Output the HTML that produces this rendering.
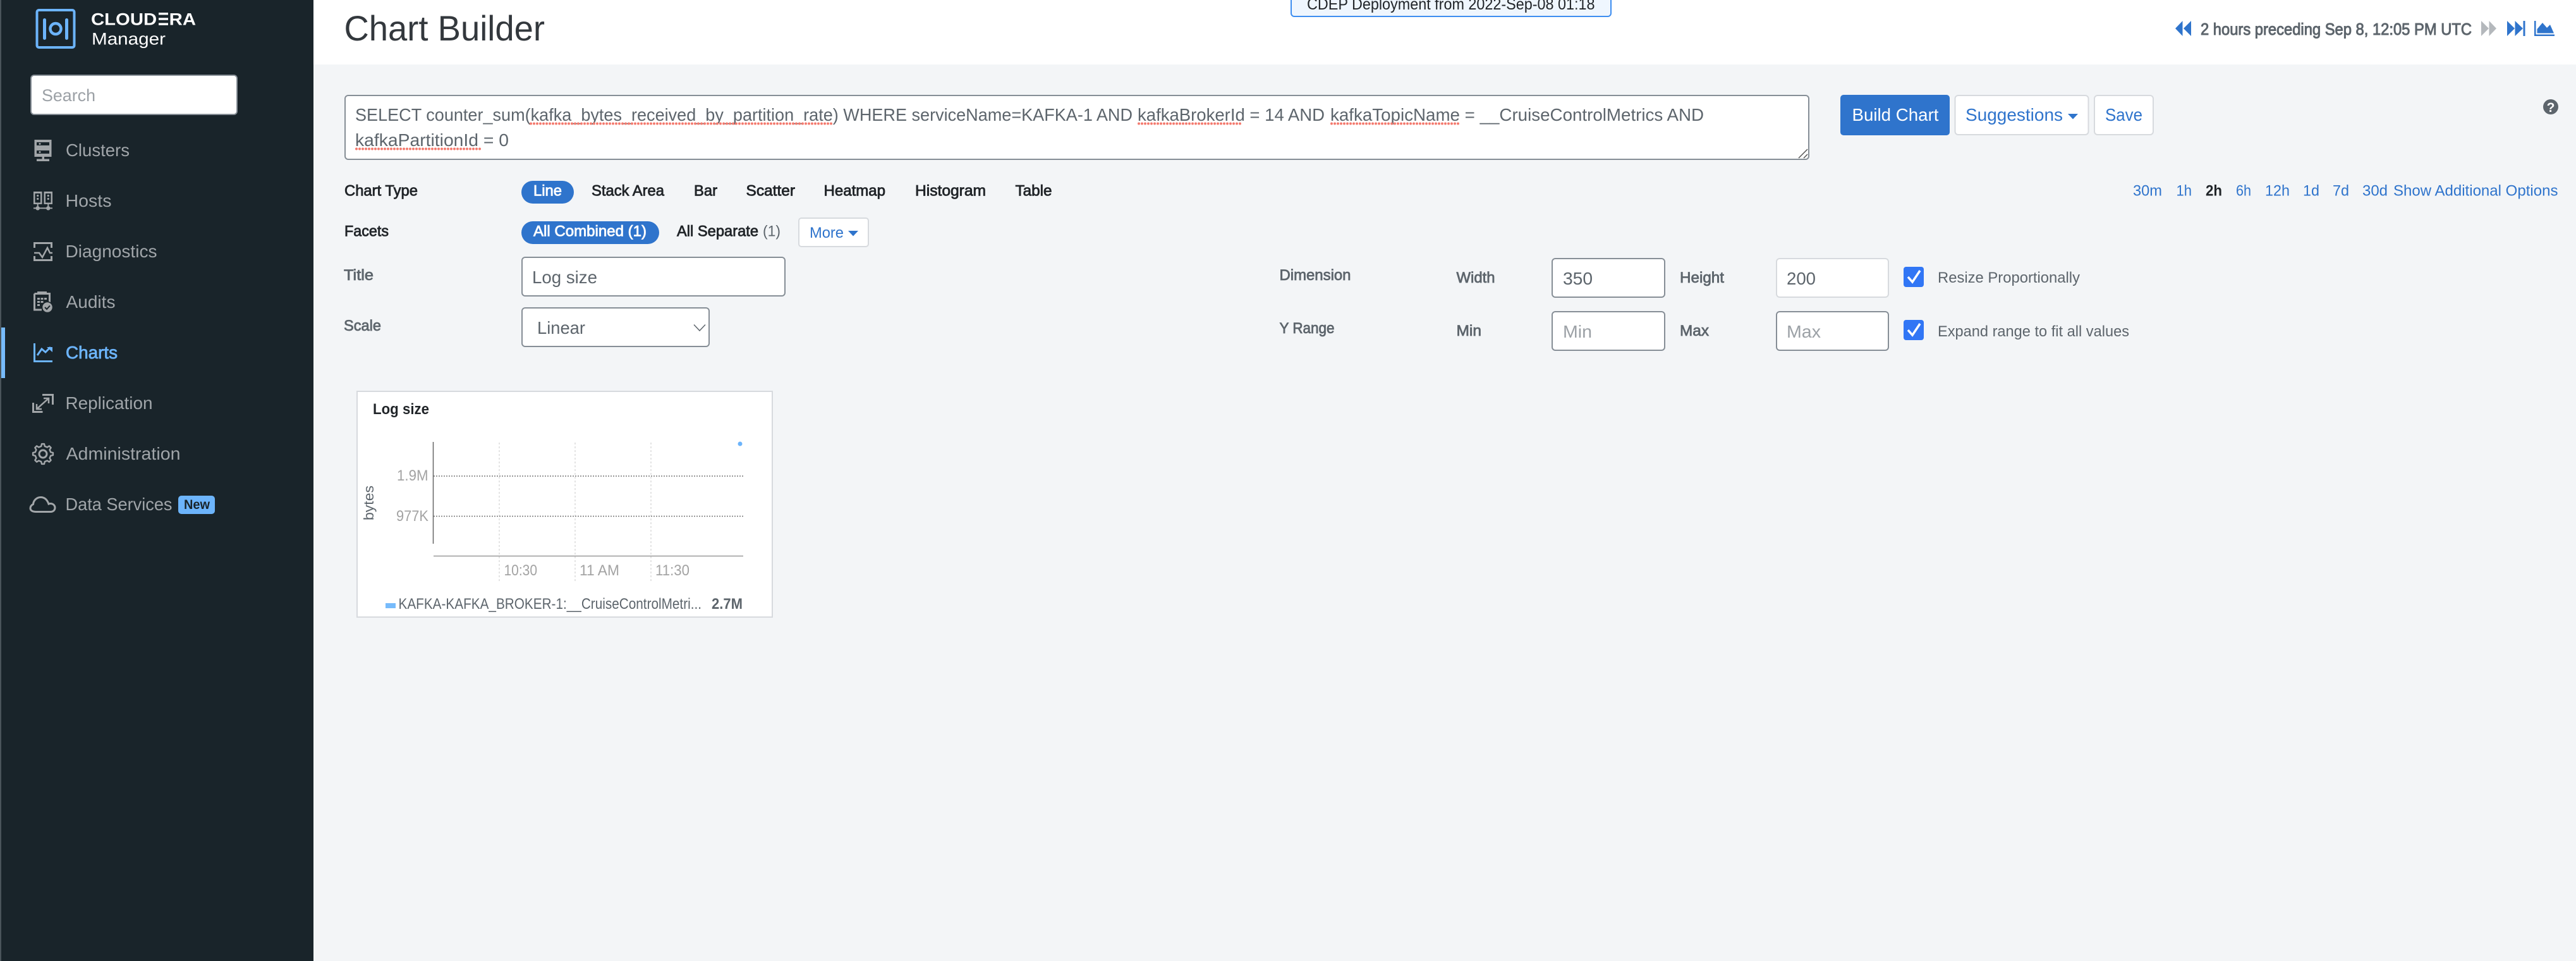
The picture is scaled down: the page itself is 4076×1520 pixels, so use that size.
<!DOCTYPE html>
<html lang="en"><head><meta charset="utf-8"><title>Chart Builder</title>
<style>
html,body{margin:0;padding:0;background:#f3f5f7;width:4076px;height:1520px;overflow:hidden}
svg{display:block}
text{font-family:"Liberation Sans",Arial,sans-serif;fill:currentColor;white-space:pre}
.m{stroke:currentColor;stroke-width:.8}
.m2{stroke:currentColor;stroke-width:1}
.d{color:#212529}.g{color:#5d656c}.b{color:#2f74cc}.w{color:#fff}.n{color:#a0a5a9}.p{color:#9ca1a6}.c{color:#a3a3a3}
.i{fill:#a2a6a9}.s{fill:none;stroke:#a2a6a9;stroke-width:3}
.box{fill:#fff;stroke:#868e96;stroke-width:2}.lb{fill:#fff;stroke:#d7dade;stroke-width:2}
.sq{fill:none;stroke:#f47a6e;stroke-width:4;stroke-linecap:round;stroke-dasharray:0 5}
</style></head><body>
<svg xmlns="http://www.w3.org/2000/svg" width="4076" height="1520" viewBox="0 0 4076 1520">
<rect width="4076" height="1520" fill="#f3f5f7"/>
<rect x="496" width="3580" height="102" fill="#fff"/>
<rect width="496" height="1520" fill="#19242a"/>
<rect width="2" height="1520" fill="#4a545a"/>

<!-- logo -->
<rect x="58.500" y="16" width="59" height="59" rx="3" fill="none" stroke="#6cb4fb" stroke-width="4"/>
<rect x="68" y="29" width="5" height="34" rx="2.500" fill="#6cb4fb"/><rect x="103" y="29" width="5" height="34" rx="2.500" fill="#6cb4fb"/>
<circle cx="88" cy="45.500" r="8.500" fill="none" stroke="#6cb4fb" stroke-width="4.500"/>
<text class="w" x="144" y="39.700" font-size="27" font-weight="700" textLength="166" lengthAdjust="spacingAndGlyphs">CLOUD<tspan fill="transparent">E</tspan>RA</text>
<path fill="#fff" d="M251 20H266V23.500H251ZM251 28.200H266V31.700H251ZM251 36.400H266V39.900H251Z"/>
<text class="w" x="145" y="70.500" font-size="26.500" textLength="117" lengthAdjust="spacingAndGlyphs">Manager</text>

<!-- search -->
<rect x="49" y="119" width="326" height="62" rx="5" class="box"/>
<text class="p" x="66" y="160" font-size="27" textLength="85" lengthAdjust="spacingAndGlyphs">Search</text>

<!-- nav -->
<g font-size="27.500">
<text class="n" x="104" y="247" textLength="101" lengthAdjust="spacingAndGlyphs">Clusters</text>
<text class="n" x="103.500" y="327" textLength="73" lengthAdjust="spacingAndGlyphs">Hosts</text>
<text class="n" x="103.500" y="407" textLength="145" lengthAdjust="spacingAndGlyphs">Diagnostics</text>
<text class="n" x="104.500" y="487" textLength="78" lengthAdjust="spacingAndGlyphs">Audits</text>
<text style="color:#6cb4fb" class="m" x="104" y="567" textLength="82" lengthAdjust="spacingAndGlyphs">Charts</text>
<text class="n" x="103.500" y="647" textLength="138" lengthAdjust="spacingAndGlyphs">Replication</text>
<text class="n" x="104.500" y="727" textLength="181" lengthAdjust="spacingAndGlyphs">Administration</text>
<text class="n" x="103.500" y="807" textLength="169" lengthAdjust="spacingAndGlyphs">Data Services</text>
</g>
<rect x="282" y="784" width="58" height="29" rx="5" fill="#6cb4fb"/>
<text x="291" y="805" font-size="21" font-weight="700" style="color:#19242a" textLength="41" lengthAdjust="spacingAndGlyphs">New</text>
<rect x="2" y="518" width="6" height="80" fill="#77bbfb"/>

<!-- clusters icon -->
<path class="i" fill-rule="evenodd" d="M54.500 221H81.500V234.500H54.500ZM58 225V230H78V225ZM54.500 234.500H81.500V248H54.500ZM58 238V243H78V238Z"/>
<rect class="i" x="66.500" y="247" width="3.500" height="5"/><rect class="i" x="58" y="251.500" width="20" height="3.500"/>
<circle class="i" cx="63" cy="227.500" r="1.500"/><circle class="i" cx="63" cy="240.500" r="1.500"/>
<!-- hosts icon -->
<path class="i" fill-rule="evenodd" d="M53 303H66.500V323H53ZM55.500 306V320.500H64V306ZM69.500 303H83V323H69.500ZM72 306V320.500H80.500V306Z"/>
<circle class="i" cx="59.700" cy="309.500" r="1.600"/><circle class="i" cx="59.700" cy="314.500" r="1.600"/><circle class="i" cx="76.300" cy="309.500" r="1.600"/><circle class="i" cx="76.300" cy="314.500" r="1.600"/>
<rect class="i" x="58.700" y="323" width="2" height="5"/><rect class="i" x="75.300" y="323" width="2" height="5"/><rect class="i" x="53" y="328.300" width="30" height="2"/>
<circle class="i" cx="59.700" cy="329.300" r="3.200"/><circle class="i" cx="76.300" cy="329.300" r="3.200"/>
<!-- diagnostics icon -->
<path class="s" d="M54.500 392V384.500H81.500V392M54.500 405V411.500H81.500V405"/>
<path class="s" style="stroke-width:2.500" d="M54 400H62L67 407L75 392L79 400H83"/>
<!-- audits icon -->
<path class="s" d="M54.500 464.500H78.500V480M54.500 464.500V490H66"/><rect class="i" x="59" y="461" width="15" height="5"/>
<path class="i" d="M59 471h4v3h-4zM64.500 471h4v3h-4zM70 471h4v3h-4zM59 476h4v3h-4zM64.500 476h4v3h-4zM59 481h4v3h-4z"/>
<circle class="i" cx="75" cy="486" r="8.500" stroke="#19242a" stroke-width="1.500"/>
<path d="M71 486l3 3 5-5.500" fill="none" stroke="#19242a" stroke-width="2"/>
<!-- charts icon -->
<path fill="none" stroke="#6cb4fb" stroke-width="3" d="M54.500 543V571.500H83"/>
<path fill="none" stroke="#6cb4fb" stroke-width="3" d="M59 562L66 552L72 557L80 549"/>
<path fill="#6cb4fb" d="M74 549H83V557Z"/>
<!-- replication icon -->
<path class="s" d="M67 624.500H83.500V640M67.500 651.500H52.500V637"/>
<path class="s" style="stroke-width:2.500" d="M58 647L77 630M69 630H77V638M58 639V647H66"/>
<!-- administration icon -->
<g transform="translate(68 718)" fill="none" stroke="#a2a6a9">
<circle r="6" stroke-width="3"/>
<path stroke-width="2.500" stroke-linejoin="round" d="M-2.810 -12.180L-1.950 -15.880L1.950 -15.880L2.810 -12.180L6.620 -10.600L9.850 -12.610L12.610 -9.850L10.600 -6.620L12.180 -2.810L15.880 -1.950L15.880 1.950L12.180 2.810L10.600 6.620L12.610 9.850L9.850 12.610L6.620 10.600L2.810 12.180L1.950 15.880L-1.950 15.880L-2.810 12.180L-6.620 10.600L-9.850 12.610L-12.610 9.850L-10.600 6.620L-12.180 2.810L-15.880 1.950L-15.880 -1.950L-12.180 -2.810L-10.600 -6.620L-12.610 -9.850L-9.850 -12.610L-6.620 -10.600Z"/>
</g>
<!-- cloud icon -->
<path class="s" d="M57 809.500H80c4.500 0 7-3 7-6.500s-3-6.500-7-6.500c-1 0-2 .2-3 .6C74.500 790 70 786.500 64.500 786.500c-6.500 0-11.500 5-12 11C49.500 799 48 801.500 48 804c0 3 3 5.500 9 5.500Z"/>

<!-- header -->
<text class="d" x="544.500" y="64" font-size="56" textLength="317.500" lengthAdjust="spacingAndGlyphs" style="color:#33383d">Chart Builder</text>
<rect x="2043" y="-10" width="506" height="36" rx="5" fill="#eff6fe" stroke="#3e8ef0" stroke-width="2"/>
<text class="d" x="2068" y="15" font-size="25" textLength="455.500" lengthAdjust="spacingAndGlyphs">CDEP Deployment from 2022-Sep-08 01:18</text>

<!-- time controls -->
<path fill="#2f74cc" d="M3442 45L3453.500 33V57ZM3455 45L3467 33V57Z"/>
<text class="g m2" x="3482" y="55" font-size="26" textLength="429" lengthAdjust="spacingAndGlyphs">2 hours preceding Sep 8, 12:05 PM UTC</text>
<path fill="#b4b8bc" d="M3926 33L3938 45L3926 57ZM3938.500 33L3950 45L3938.500 57Z"/>
<path fill="#2f74cc" d="M3967 33L3979 45L3967 57ZM3979.500 33L3992 45L3979.500 57ZM3992.500 33H3995.500V57H3992.500Z"/>
<path fill="#2f74cc" d="M4010 33H4012.500V54.500H4042V57H4010ZM4014.500 52.500V46L4023 36L4030 44L4035 39L4041 52.500Z"/>

<!-- query textarea -->
<rect x="546" y="151" width="2316" height="101" rx="5" class="box"/>
<g font-size="27.500" class="g">
<text x="562" y="191" textLength="1230" lengthAdjust="spacingAndGlyphs">SELECT counter_sum(kafka_bytes_received_by_partition_rate) WHERE serviceName=KAFKA-1 AND</text>
<text x="1800" y="191" textLength="296" lengthAdjust="spacingAndGlyphs">kafkaBrokerId = 14 AND</text>
<text x="2105" y="191" textLength="591" lengthAdjust="spacingAndGlyphs">kafkaTopicName = __CruiseControlMetrics AND</text>
<text x="562" y="231" textLength="243" lengthAdjust="spacingAndGlyphs">kafkaPartitionId = 0</text>
</g>
<path class="sq" d="M840 195.500H1316M1802 195.500H1967M2107 195.500H2310M564 235.500H760"/>
<path fill="none" stroke="#555" stroke-width="1.500" d="M2846 250L2860 236M2854 250L2860 244"/>

<!-- buttons -->
<rect x="2912" y="150" width="173" height="64" rx="5" fill="#2f74cc"/>
<text class="w" x="2930.500" y="191" font-size="27.500" textLength="137" lengthAdjust="spacingAndGlyphs">Build Chart</text>
<rect x="3093.500" y="151" width="211" height="62" rx="5" class="lb"/>
<text class="b" x="3110" y="191" font-size="27.500" textLength="154" lengthAdjust="spacingAndGlyphs">Suggestions</text>
<path fill="#2f74cc" d="M3272 180H3288L3280 188.500Z"/>
<rect x="3314" y="151" width="93" height="62" rx="5" class="lb"/>
<text class="b" x="3331" y="191" font-size="27.500" textLength="59" lengthAdjust="spacingAndGlyphs">Save</text>
<circle cx="4036" cy="169" r="12" fill="#5d656c"/>
<text x="4036" y="177" font-size="21" font-weight="700" text-anchor="middle" class="w">?</text>

<!-- chart type row -->
<g font-size="24">
<text class="d m" x="545" y="309.500" textLength="116" lengthAdjust="spacingAndGlyphs">Chart Type</text>
<rect x="825" y="286" width="83" height="36" rx="18" fill="#2f74cc"/>
<text class="w m" x="844" y="309.500" textLength="45" lengthAdjust="spacingAndGlyphs">Line</text>
<text class="d m" x="936" y="309.500" textLength="115" lengthAdjust="spacingAndGlyphs">Stack Area</text>
<text class="d m" x="1098" y="309.500" textLength="37" lengthAdjust="spacingAndGlyphs">Bar</text>
<text class="d m" x="1180.500" y="309.500" textLength="77.500" lengthAdjust="spacingAndGlyphs">Scatter</text>
<text class="d m" x="1303.500" y="309.500" textLength="97.500" lengthAdjust="spacingAndGlyphs">Heatmap</text>
<text class="d m" x="1448" y="309.500" textLength="112" lengthAdjust="spacingAndGlyphs">Histogram</text>
<text class="d m" x="1606.500" y="309.500" textLength="58" lengthAdjust="spacingAndGlyphs">Table</text>

<text class="d m" x="545" y="373.500" textLength="70" lengthAdjust="spacingAndGlyphs">Facets</text>
<rect x="825" y="350" width="218" height="36" rx="18" fill="#2f74cc"/>
<text class="w m" x="844" y="373.500" textLength="179" lengthAdjust="spacingAndGlyphs">All Combined (1)</text>
<text class="d m" x="1071" y="373.500" textLength="129" lengthAdjust="spacingAndGlyphs">All Separate</text>
<text class="g" x="1207" y="373.500" textLength="28" lengthAdjust="spacingAndGlyphs">(1)</text>
</g>
<rect x="1264" y="345" width="110" height="45" rx="4" class="lb"/>
<text class="b" x="1281" y="376" font-size="24" textLength="54" lengthAdjust="spacingAndGlyphs">More</text>
<path fill="#2f74cc" d="M1342 365H1358L1350 373.500Z"/>

<!-- range links -->
<g font-size="24" class="b">
<text x="3375" y="309.500" textLength="46" lengthAdjust="spacingAndGlyphs">30m</text>
<text x="3443.500" y="309.500" textLength="24.500" lengthAdjust="spacingAndGlyphs">1h</text>
<text class="d" x="3490" y="309.500" textLength="26" lengthAdjust="spacingAndGlyphs" font-weight="700">2h</text>
<text x="3538" y="309.500" textLength="24" lengthAdjust="spacingAndGlyphs">6h</text>
<text x="3584" y="309.500" textLength="39" lengthAdjust="spacingAndGlyphs">12h</text>
<text x="3644" y="309.500" textLength="26" lengthAdjust="spacingAndGlyphs">1d</text>
<text x="3691" y="309.500" textLength="26" lengthAdjust="spacingAndGlyphs">7d</text>
<text x="3738" y="309.500" textLength="40" lengthAdjust="spacingAndGlyphs">30d</text>
<text x="3787" y="309.500" textLength="260.500" lengthAdjust="spacingAndGlyphs">Show Additional Options</text>
</g>

<!-- title / scale -->
<g font-size="24" class="g">
<text class="m" x="544" y="443" textLength="47" lengthAdjust="spacingAndGlyphs">Title</text>
<text class="m" x="544" y="523" textLength="59" lengthAdjust="spacingAndGlyphs">Scale</text>
<text class="m" x="2024.500" y="443" textLength="113" lengthAdjust="spacingAndGlyphs">Dimension</text>
<text class="m" x="2024.500" y="527" textLength="87" lengthAdjust="spacingAndGlyphs">Y Range</text>
<text class="m" x="2304.500" y="447" textLength="61" lengthAdjust="spacingAndGlyphs">Width</text>
<text class="m" x="2304.500" y="531" textLength="39.500" lengthAdjust="spacingAndGlyphs">Min</text>
<text class="m" x="2658" y="447" textLength="70" lengthAdjust="spacingAndGlyphs">Height</text>
<text class="m" x="2658" y="531" textLength="46" lengthAdjust="spacingAndGlyphs">Max</text>
</g>
<rect x="826" y="407" width="416" height="61" rx="5" class="box"/>
<text class="g" x="842" y="448" font-size="27.500" textLength="103" lengthAdjust="spacingAndGlyphs">Log size</text>
<rect x="826" y="487" width="296" height="61" rx="5" class="box"/>
<text class="g" x="850" y="528" font-size="27.500" textLength="76" lengthAdjust="spacingAndGlyphs">Linear</text>
<path fill="none" stroke="#5d656c" stroke-width="1.500" d="M1098 513.500L1107 523L1116 513.500"/>

<rect x="2456" y="409" width="178" height="61" rx="5" class="box"/>
<text class="g" x="2473" y="450" font-size="27.500" textLength="47" lengthAdjust="spacingAndGlyphs">350</text>
<rect x="2456" y="493" width="178" height="61" rx="5" class="box"/>
<text class="p" x="2473" y="534" font-size="27.500" textLength="46" lengthAdjust="spacingAndGlyphs">Min</text>
<rect x="2811" y="409" width="177" height="61" rx="5" class="lb"/>
<text class="g" x="2827" y="450" font-size="27.500" textLength="46" lengthAdjust="spacingAndGlyphs">200</text>
<rect x="2811" y="493" width="177" height="61" rx="5" class="box"/>
<text class="p" x="2827" y="534" font-size="27.500" textLength="54" lengthAdjust="spacingAndGlyphs">Max</text>

<rect x="3012" y="422" width="32" height="32" rx="4" fill="#3176f5"/>
<path fill="none" stroke="#fff" stroke-width="3.500" d="M3019 438L3026 446L3038 428"/>
<text class="g" x="3066" y="447" font-size="24" textLength="225" lengthAdjust="spacingAndGlyphs">Resize Proportionally</text>
<rect x="3012" y="506" width="32" height="32" rx="4" fill="#3176f5"/>
<path fill="none" stroke="#fff" stroke-width="3.500" d="M3019 522L3026 530L3038 512"/>
<text class="g" x="3066" y="532" font-size="24" textLength="303" lengthAdjust="spacingAndGlyphs">Expand range to fit all values</text>

<!-- chart card -->
<rect x="565" y="619" width="657" height="357" class="lb"/>
<text class="d" x="590" y="655" font-size="24" font-weight="700" textLength="89" lengthAdjust="spacingAndGlyphs">Log size</text>
<path stroke="#dcdcdc" stroke-width="1.500" stroke-dasharray="3 3" d="M790 700V920M910 700V920M1030 700V920"/>
<path stroke="#777" stroke-width="1.500" stroke-dasharray="2 2" d="M686 753H1176M686 816.500H1176"/>
<path stroke="#666" stroke-width="1.500" d="M685.500 699V860"/>
<path stroke="#999" stroke-width="1.500" d="M686 879.500H1176"/>
<circle cx="1171" cy="702" r="3.500" fill="#6cb4fb"/>
<g font-size="24" class="c">
<text x="628" y="760" textLength="49.500" lengthAdjust="spacingAndGlyphs">1.9M</text>
<text x="627" y="824" textLength="51" lengthAdjust="spacingAndGlyphs">977K</text>
<text x="797.500" y="910" textLength="52.500" lengthAdjust="spacingAndGlyphs">10:30</text>
<text x="917" y="910" textLength="63" lengthAdjust="spacingAndGlyphs">11 AM</text>
<text x="1037" y="910" textLength="54" lengthAdjust="spacingAndGlyphs">11:30</text>
</g>
<text class="g" transform="translate(591 823) rotate(-90)" font-size="22" textLength="55" lengthAdjust="spacingAndGlyphs">bytes</text>
<rect x="610" y="954" width="16" height="8" fill="#77bbfb"/>
<text class="g" x="630.500" y="963" font-size="24" textLength="479.500" lengthAdjust="spacingAndGlyphs">KAFKA-KAFKA_BROKER-1:__CruiseControlMetri...</text>
<text class="g" x="1126" y="963" font-size="24" font-weight="700" textLength="49" lengthAdjust="spacingAndGlyphs">2.7M</text>
</svg>
</body></html>
